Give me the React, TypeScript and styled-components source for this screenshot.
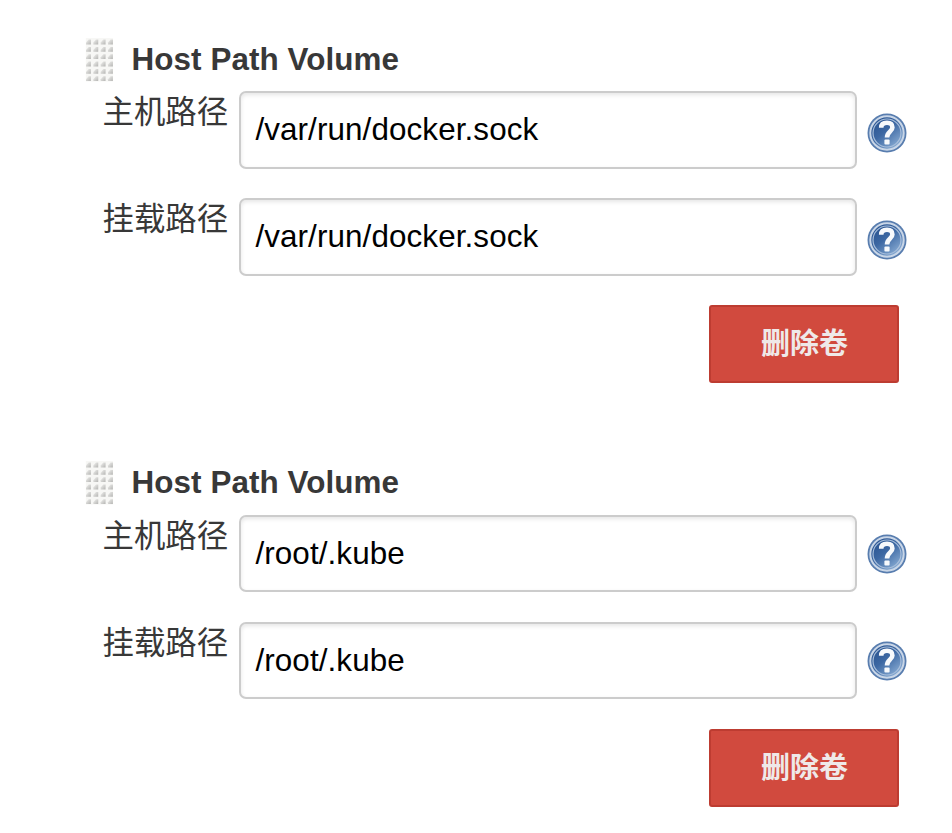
import React from 'react';
import styled, { createGlobalStyle } from 'styled-components';

const GlobalStyle = createGlobalStyle`
  * { box-sizing: border-box; }
  body {
    margin: 0;
    background: #fff;
    color: #383838;
    font-family: "Liberation Sans", "Noto Sans CJK SC", sans-serif;
  }
`;

const Page = styled.main`
  width: 952px;
  height: 833px;
  overflow: hidden;
  padding: 38px 0 0 85px;
  display: flex;
  flex-direction: column;
`;

const Volume = styled.section`
  width: 822px;
  height: 423.4px;
  flex: none;
  display: flex;
  flex-direction: column;
`;

const Header = styled.header`
  display: flex;
  height: 53.4px;
  flex: none;
`;

const Title = styled.h2`
  margin: 0 0 0 17.5px;
  font-size: 31.4px;
  line-height: 43px;
  font-weight: 700;
  letter-spacing: 0.08px;
  white-space: nowrap;
`;

const Row = styled.div`
  display: grid;
  grid-template-columns: 154.4px 618px 40px;
  height: 107px;
  flex: none;
`;

const Label = styled.label`
  padding-left: 17.5px;
  font-size: 31.4px;
  line-height: 43px;
  font-weight: 400;
  white-space: nowrap;
`;

const Input = styled.input`
  width: 618px;
  height: 77.5px;
  margin: 0;
  padding: 0 14px;
  border: 2px solid #ccc;
  border-radius: 7px;
  outline: none;
  background: #fff;
  box-shadow: inset 0 2px 4px rgba(0, 0, 0, 0.1);
  color: #000;
  font-family: inherit;
  font-size: 31.4px;
  letter-spacing: 0.1px;
`;

const Help = styled.svg<{ $top: number }>`
  display: block;
  width: 40px;
  height: 40px;
  margin: ${(p) => p.$top}px 0 0 9.2px;
`;

const DeleteButton = styled.button`
  align-self: flex-end;
  width: 190px;
  height: 78px;
  margin: 0 8px 0 0;
  padding: 0 0 6px 1px;
  border: 2px solid #bd3c31;
  border-radius: 3px;
  background: #d14a3e;
  color: #efe9e9;
  font-family: inherit;
  font-size: 29px;
  font-weight: 700;
`;

const GripDrawing = styled.svg`
  display: block;
  flex: none;
  width: 29px;
  height: 44px;
`;

function Grip({ id }: { id: string }) {
  const dots = [];
  for (let r = 0; r < 6; r++) {
    for (let c = 0; c < 4; c++) {
      const x = c * 7.33;
      const y = r * 7.33;
      dots.push(
        <path
          key={`${r}-${c}`}
          d={`M${x + 1} ${y + 6.4}V${y + 4.6}L${x + 3.6} ${y + 1.6}H${x + 5.9}V${y + 6.4}Z`}
          fill={`url(#${id})`}
        />,
      );
    }
  }
  return (
    <GripDrawing viewBox="0 0 29 44">
      <defs>
        <linearGradient id={id} x1="0" y1="0" x2="1" y2="1">
          <stop offset="0.2" stopColor="#e6e6e4" />
          <stop offset="0.6" stopColor="#cdcdcb" />
          <stop offset="1" stopColor="#b4b4b2" />
        </linearGradient>
      </defs>
      <rect x="0.8" width="27.3" height="43.5" fill="#f7f7f5" />
      {dots}
    </GripDrawing>
  );
}

function HelpIcon({ id, top }: { id: string; top: number }) {
  return (
    <Help $top={top} viewBox="0 0 40 40" role="img" aria-label="?">
      <defs>
        <linearGradient id={id} x1="0.1" y1="0.1" x2="0.8" y2="0.95">
          <stop offset="0" stopColor="#28528f" />
          <stop offset="0.45" stopColor="#3d68a3" />
          <stop offset="1" stopColor="#8cafd6" />
        </linearGradient>
      </defs>
      <circle cx="20" cy="20" r="19.5" fill="#587daf" />
      <circle cx="20" cy="20" r="16.7" fill={`url(#${id})`} stroke="#c9d6e7" strokeWidth="2" />
      <circle cx="20" cy="20" r="14" fill="none" stroke="#a9bfdb" strokeWidth="1.2" />
      <path
        d="M14.2 14.8C14.2 11.3 16.6 9.8 20 9.8C23.5 9.8 25.4 11.6 25.4 14.5C25.4 18.6 20 19 20 24.4"
        fill="none"
        stroke="#f7f9fc"
        strokeWidth="4.6"
        strokeLinejoin="round"
      />
      <rect x="17.4" y="26.6" width="5.2" height="5" rx="1" fill="#f7f9fc" />
    </Help>
  );
}

const volumes = [
  { path: '/var/run/docker.sock', helpTop: 21.2 },
  { path: '/root/.kube', helpTop: 18.8 },
];

export default function App() {
  return (
    <>
      <GlobalStyle />
      <Page>
        {volumes.map((v, i) => (
          <Volume key={v.path}>
            <Header>
              <Grip id={`grip-${i}`} />
              <Title>Host Path Volume</Title>
            </Header>
            {['主机路径', '挂载路径'].map((label, j) => (
              <Row key={label}>
                <Label htmlFor={`path-${i}-${j}`}>{label}</Label>
                <Input id={`path-${i}-${j}`} defaultValue={v.path} />
                <HelpIcon id={`help-${i}-${j}`} top={v.helpTop} />
              </Row>
            ))}
            <DeleteButton type="button">删除卷</DeleteButton>
          </Volume>
        ))}
      </Page>
    </>
  );
}
